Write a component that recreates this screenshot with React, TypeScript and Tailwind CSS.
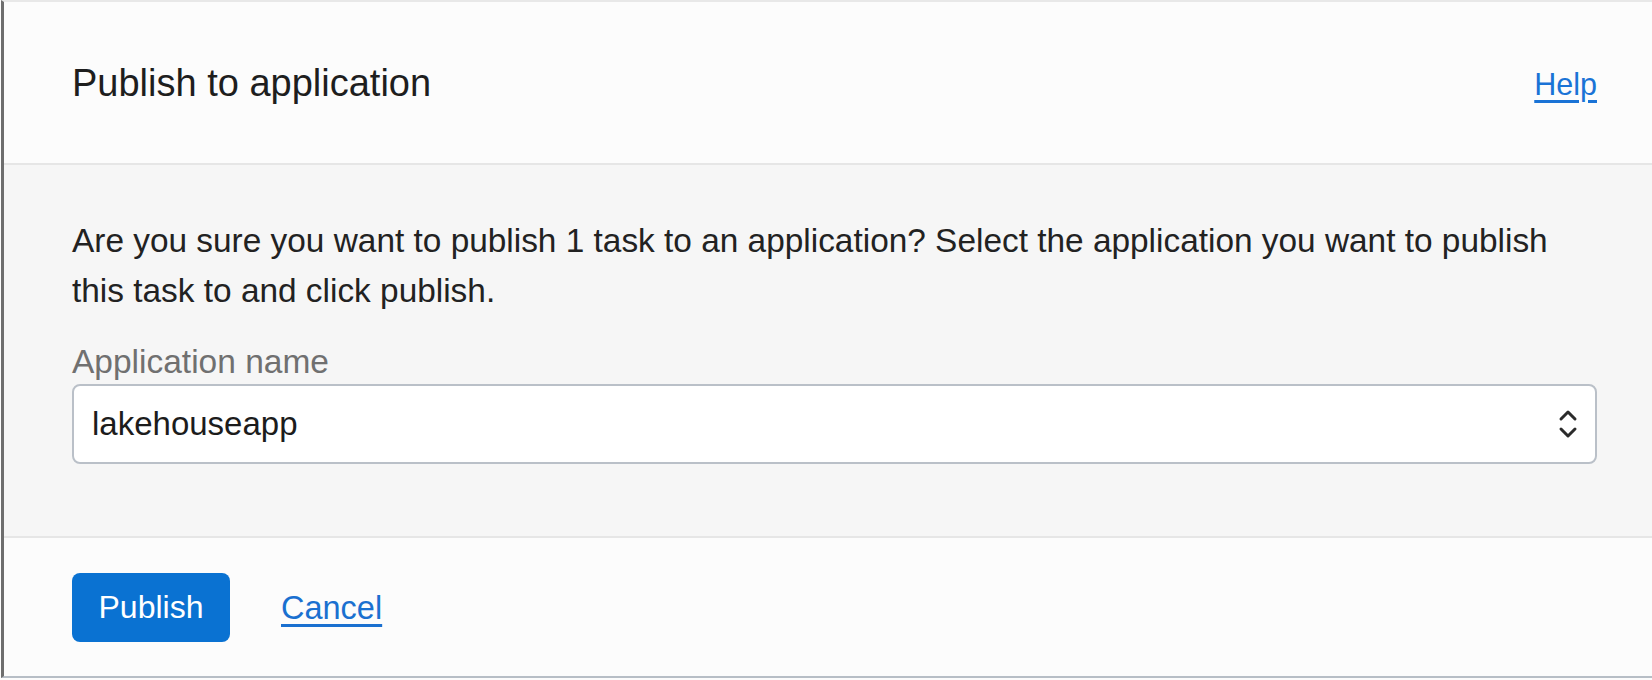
import { useState } from "react"

const Chevrons = () => (
  <svg width="20" height="30" viewBox="0 0 20 30" fill="none" stroke="#2b2b2b" strokeWidth={3} strokeLinecap="round" strokeLinejoin="round">
    <path d="M3 10 L10 3 L17 10" />
    <path d="M3 20 L10 27 L17 20" />
  </svg>
)

export default function App() {
  const [app] = useState<string>("lakehouseapp");

  return (
    <div className="h-[680px] w-full bg-[#fcfcfc] font-['Liberation_Sans',Arial,sans-serif]">
      <div className="flex h-[678px] flex-col border-t-2 border-b-2 border-l-[3px] border-t-[#e8e8e8] border-b-[#b7bec6] border-l-[#6e6e6e] ml-px">
        {/* header */}
        <div className="flex h-[161px] items-center justify-between bg-[#fcfcfc] pl-[68px] pr-[55px]">
          <h1 className="text-[38px] leading-none text-[#1e1e1e]">Publish to application</h1>
          <a href="#" className="mt-[4px] text-[30.5px] leading-none text-[#1a73d6] underline underline-offset-[5px]">Help</a>
        </div>

        {/* body */}
        <div className="flex flex-col border-y-2 border-[#e6e6e6] bg-[#f6f6f6] pl-[68px] pr-[55px] pt-[51px] pb-[72px]">
          <p className="text-[33.4px] leading-[50px] text-[#222222]">
            Are you sure you want to publish 1 task to an application? Select the application you want to publish this task to and click publish.
          </p>
          <label className="mt-[26px] text-[33.5px] leading-[40px] text-[#707070]">Application name</label>
          <div className="mt-[2px] flex h-[80px] items-center justify-between rounded-[8px] border-2 border-[#bac0c8] bg-white pl-[18px] pr-[17px]">
            <span className="text-[33px] text-[#1c1c1c]">{app}</span>
            <Chevrons />
          </div>
        </div>

        {/* footer */}
        <div className="flex flex-1 items-center gap-[51px] bg-[#fcfcfc] pl-[68px]">
          <button type="button" className="h-[69px] w-[158px] rounded-[8px] bg-[#0a72d2] text-[32px] text-white">
            Publish
          </button>
          <a href="#" className="mt-[2px] text-[32.5px] text-[#1a70d0] underline underline-offset-[5px]">Cancel</a>
        </div>
      </div>
    </div>
  )
}
